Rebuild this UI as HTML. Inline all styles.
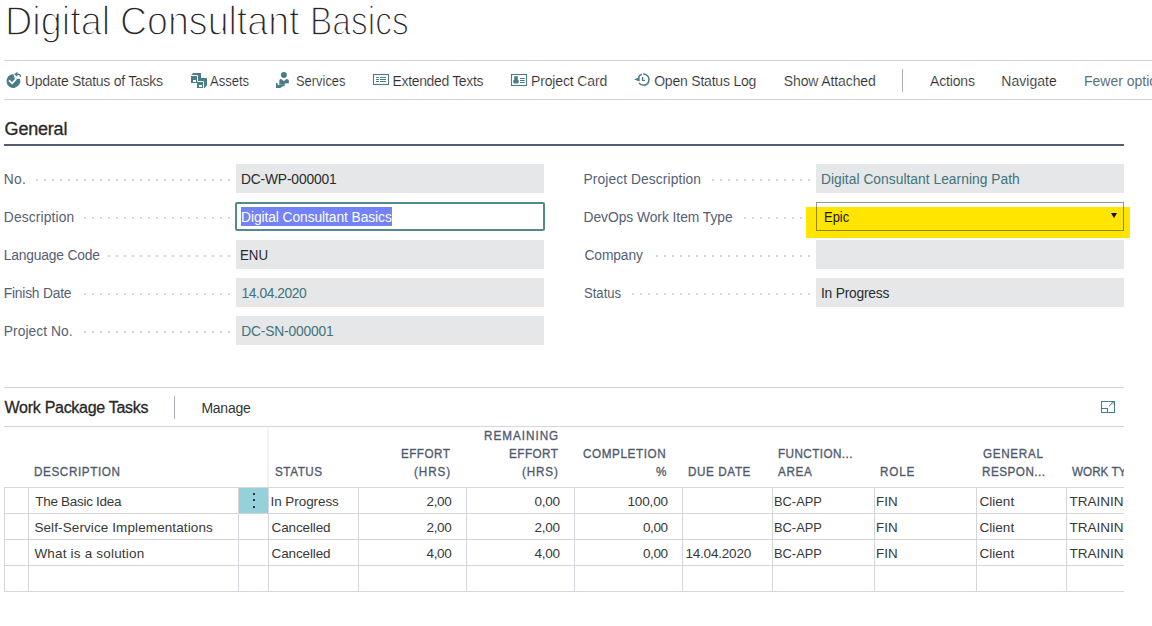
<!DOCTYPE html>
<html><head><meta charset="utf-8">
<style>
html,body{margin:0;padding:0;background:#fff;width:1152px;height:626px;overflow:hidden;position:relative;font-family:"Liberation Sans",sans-serif;}
.a{position:absolute;white-space:nowrap;}
.t{position:absolute;white-space:nowrap;line-height:1;}
.title{left:5px;top:0px;font-size:41.5px;color:#262626;-webkit-text-stroke:1.5px #fff;transform-origin:0 0;transform:scaleX(0.8817);}
.hl{position:absolute;height:1px;background:#d4d6da;}
.ico{position:absolute;}
.fld{position:absolute;background:#e6e7e9;height:29px;}
.dots{position:absolute;height:2px;background:repeating-linear-gradient(to right,#d2d4d8 0 2px,transparent 2px 8px);}
.vl{position:absolute;width:1px;background:#d8dadf;}
</style></head><body>
<div class="hl" style="left:4px;top:60px;width:1148px"></div>
<div class="hl" style="left:4px;top:99px;width:1148px"></div>
<svg class="ico" style="left:4px;top:68px" width="20" height="22" viewBox="0 0 20 22">
  <path d="M9.2 6.1 A6.9 6.9 0 1 0 15.95 10.8 L11 11 Z" fill="#4a7d88"/>
  <path d="M5 12.4 L8.1 15.4 L12.2 10.9" stroke="#fff" stroke-width="1.7" fill="none"/>
  <path d="M10.1 6.3 L13.4 3.8 L13.4 8.7 Z" fill="#4a7d88"/>
  <path d="M13 6.3 C15.4 6.1 16.5 6.8 16.6 8.9" stroke="#4a7d88" stroke-width="1.4" fill="none"/>
</svg>
<svg class="ico" style="left:186px;top:68px" width="22" height="22" viewBox="0 0 22 22">
  <path d="M5 7.3 L7.3 5 H14.6 L15 5.4 V10 H20.6 L21 10.4 V17.6 L18.6 20 H11 V15 H5 Z" fill="#4a7d88"/>
  <path d="M5 7.5 H11.5 V13.5 H17.5 V20" stroke="#fff" stroke-width="1" fill="none"/>
  <rect x="7" y="12" width="3" height="2" fill="#fff"/>
  <rect x="13" y="17" width="3" height="2" fill="#fff"/>
</svg>
<svg class="ico" style="left:272px;top:68px" width="22" height="22" viewBox="0 0 22 22">
  <circle cx="11.9" cy="6.9" r="3" fill="#4a7d88"/>
  <path d="M7.3 13 C7.3 11.6 8.2 11 9.4 11 L11.3 12.8 L12.5 12.8 L14.4 11 C15.9 11 16.9 11.8 16.9 13.2 L16.9 15.3 L12.8 15.6 L12.3 18.6 L11.6 16.2 L7.3 16.6 Z" fill="#4a7d88"/>
  <path d="M4 15 L5.6 15 L5.6 16.9 L12.2 15.9 L12.6 17.4 L8.6 19.4 L8.6 20 L4 20 Z" fill="#4a7d88"/>
</svg>
<svg class="ico" style="left:370px;top:70px" width="22" height="20" viewBox="0 0 22 20">
  <rect x="3.5" y="4.5" width="15" height="10" stroke="#4a7d88" stroke-width="1.1" fill="none"/>
  <path d="M6 7.4 H8.9 M6 9.5 H8.9 M6 11.5 H8.9 M10.1 7.4 H16 M10.1 9.5 H16 M10.1 11.5 H16" stroke="#4a7d88" stroke-width="1"/>
</svg>
<svg class="ico" style="left:508px;top:70px" width="22" height="20" viewBox="0 0 22 20">
  <rect x="3.5" y="4.5" width="15" height="11" stroke="#4a7d88" stroke-width="1.1" fill="none"/>
  <path d="M6.2 6.2 H9.8 V9.9 H10.6 V12.8 L9.8 13.6 H6.2 L5.3 12.8 V9.9 H6.2 Z" fill="#4a7d88"/>
  <path d="M12 8.5 H16.8 M12 10.5 H16.8 M12 12.5 H16.8" stroke="#4a7d88" stroke-width="1"/>
</svg>
<svg class="ico" style="left:632px;top:70px" width="20" height="20" viewBox="0 0 20 20">
  <path d="M11.2 4.1 A5.6 5.6 0 1 1 6.9 12.9" stroke="#4a7d88" stroke-width="1.5" fill="none"/>
  <path d="M9.9 4.3 A5.6 5.6 0 0 0 6.3 7.6" stroke="#4a7d88" stroke-width="1.5" fill="none"/>
  <path d="M2.1 9.4 L7.6 7.1 L7.6 11.6 Z" fill="#4a7d88"/>
  <path d="M10.5 7 V10.4 H13" stroke="#4a7d88" stroke-width="1.3" fill="none"/>
</svg>
<div class="vl" style="left:902px;top:69px;height:23px;background:#adb0bf"></div>
<div class="a" style="left:4px;top:144px;width:1120px;height:2px;background:#565c70"></div>
<div class="dots" style="left:36px;top:179px;width:194px"></div>
<div class="fld" style="left:236px;top:164px;width:308px"></div>
<div class="dots" style="left:84px;top:217px;width:146px"></div>
<div class="dots" style="left:108px;top:255px;width:122px"></div>
<div class="fld" style="left:236px;top:240px;width:308px"></div>
<div class="dots" style="left:84px;top:293px;width:146px"></div>
<div class="fld" style="left:236px;top:278px;width:308px"></div>
<div class="dots" style="left:84px;top:331px;width:146px"></div>
<div class="fld" style="left:236px;top:316px;width:308px"></div>
<div class="dots" style="left:712px;top:179px;width:98px"></div>
<div class="fld" style="left:816px;top:164px;width:308px"></div>
<div class="dots" style="left:744px;top:217px;width:66px"></div>
<div class="dots" style="left:656px;top:255px;width:154px"></div>
<div class="fld" style="left:816px;top:240px;width:308px"></div>
<div class="dots" style="left:632px;top:293px;width:178px"></div>
<div class="fld" style="left:816px;top:278px;width:308px"></div>
<div class="a" style="left:235px;top:202px;width:306px;height:25px;border:2px solid #548a8a;border-radius:2px;background:#fff"></div>
<div class="a" style="left:241px;top:207px;width:151px;height:19px;background:#7382f7"></div>
<div class="a" style="left:816px;top:202px;width:308px;height:29px;background:#fff"></div>
<div class="a" style="left:806px;top:207px;width:324px;height:31px;background:#ffe500"></div>
<div class="a" style="left:816px;top:202px;width:306px;height:27px;border:1px solid rgba(0,0,0,0.42)"></div>
<svg class="ico" style="left:1110px;top:212px" width="8" height="7" viewBox="0 0 8 7"><path d="M1 1 H7 L4 6 Z" fill="#111"/></svg>
<div class="hl" style="left:4px;top:387px;width:1120px"></div>
<div class="vl" style="left:174px;top:396px;height:23px;background:#adb0bf"></div>
<svg class="ico" style="left:1100px;top:400px" width="16" height="14" viewBox="0 0 16 14">
  <path d="M1.5 1.5 H14.5 V12.5 H1.5 Z M1.5 8.5 H7.5 V12.5" stroke="#4a7d88" stroke-width="1.1" fill="none"/>
  <path d="M9 6.2 L13.6 1.9 M11 1.8 H14.2 V5" stroke="#4a7d88" stroke-width="1" fill="none"/>
</svg>
<div class="hl" style="left:4px;top:426px;width:1120px"></div>
<div class="hl" style="left:4px;top:487px;width:1120px;background:#d4d6dc"></div>
<div class="hl" style="left:4px;top:513px;width:1120px;background:#d4d6dc"></div>
<div class="hl" style="left:4px;top:539px;width:1120px;background:#d4d6dc"></div>
<div class="hl" style="left:4px;top:565px;width:1120px;background:#d4d6dc"></div>
<div class="hl" style="left:4px;top:591px;width:1120px;background:#d4d6dc"></div>
<div class="vl" style="left:4px;top:487px;height:105px;background:#d4d6dc"></div>
<div class="vl" style="left:28px;top:487px;height:105px;background:#d4d6dc"></div>
<div class="vl" style="left:238px;top:487px;height:105px;background:#d4d6dc"></div>
<div class="vl" style="left:268px;top:487px;height:105px;background:#d4d6dc"></div>
<div class="vl" style="left:358px;top:487px;height:105px;background:#d4d6dc"></div>
<div class="vl" style="left:466px;top:487px;height:105px;background:#d4d6dc"></div>
<div class="vl" style="left:574px;top:487px;height:105px;background:#d4d6dc"></div>
<div class="vl" style="left:682px;top:487px;height:105px;background:#d4d6dc"></div>
<div class="vl" style="left:772px;top:487px;height:105px;background:#d4d6dc"></div>
<div class="vl" style="left:874px;top:487px;height:105px;background:#d4d6dc"></div>
<div class="vl" style="left:976px;top:487px;height:105px;background:#d4d6dc"></div>
<div class="vl" style="left:1066px;top:487px;height:105px;background:#d4d6dc"></div>
<div class="vl" style="left:267px;top:427px;width:2px;height:60px;background:#f2f2f3"></div>
<div class="a" style="left:239px;top:488px;width:29px;height:25px;background:#96d1d9"></div>
<div class="a" style="left:252.6px;top:493.4px;width:2px;height:2px;border-radius:0.6px;background:#1e2a2e"></div>
<div class="a" style="left:252.6px;top:499.2px;width:2px;height:2px;border-radius:0.6px;background:#1e2a2e"></div>
<div class="a" style="left:252.6px;top:505.9px;width:2px;height:2px;border-radius:0.6px;background:#1e2a2e"></div>
<div class="t" style="left:4.66px;top:0.37px;font-size:41.5px;color:#262626;letter-spacing:0.000px;-webkit-text-stroke:1.5px #fff;transform-origin:0 0;transform:scaleX(0.9128016817008595);">Digital</div>
<div class="t" style="left:120.09px;top:0.37px;font-size:41.5px;color:#262626;letter-spacing:0.000px;-webkit-text-stroke:1.5px #fff;transform-origin:0 0;transform:scaleX(0.9046506263749619);">Consultant</div>
<div class="t" style="left:310.48px;top:0.37px;font-size:41.5px;color:#262626;letter-spacing:0.000px;-webkit-text-stroke:1.5px #fff;transform-origin:0 0;transform:scaleX(0.8068840460255187);">Basics</div>
<div class="t" style="left:24.90px;top:74.15px;font-size:14px;color:#2e2e2e;letter-spacing:-0.270px;-webkit-text-stroke:0.15px #fff;">Update Status of Tasks</div>
<div class="t" style="left:210.20px;top:74.15px;font-size:14px;color:#2e2e2e;letter-spacing:0.000px;-webkit-text-stroke:0.15px #fff;transform-origin:0 0;transform:scaleX(0.9306494351727025);">Assets</div>
<div class="t" style="left:295.90px;top:74.15px;font-size:14px;color:#2e2e2e;letter-spacing:0.000px;-webkit-text-stroke:0.15px #fff;transform-origin:0 0;transform:scaleX(0.9220861909006565);">Services</div>
<div class="t" style="left:392.50px;top:74.15px;font-size:14px;color:#2e2e2e;letter-spacing:-0.344px;-webkit-text-stroke:0.15px #fff;">Extended Texts</div>
<div class="t" style="left:531.00px;top:74.15px;font-size:14px;color:#2e2e2e;letter-spacing:-0.138px;-webkit-text-stroke:0.15px #fff;">Project Card</div>
<div class="t" style="left:654.20px;top:74.15px;font-size:14px;color:#2e2e2e;letter-spacing:-0.206px;-webkit-text-stroke:0.15px #fff;">Open Status Log</div>
<div class="t" style="left:783.75px;top:74.15px;font-size:14px;color:#2e2e2e;letter-spacing:-0.111px;-webkit-text-stroke:0.15px #fff;">Show Attached</div>
<div class="t" style="left:930.00px;top:74.15px;font-size:14px;color:#2e2e2e;letter-spacing:-0.152px;-webkit-text-stroke:0.15px #fff;">Actions</div>
<div class="t" style="left:1001.30px;top:74.15px;font-size:14px;color:#2e2e2e;letter-spacing:0.033px;-webkit-text-stroke:0.15px #fff;">Navigate</div>
<div class="t" style="left:1084.00px;top:74.15px;font-size:14px;color:#5d6f80;letter-spacing:0.000px;">Fewer options</div>
<div class="t" style="left:201.40px;top:401.15px;font-size:14px;color:#333;letter-spacing:-0.241px;">Manage</div>
<div class="t" style="left:4.60px;top:119.76px;font-size:18px;color:#2a2a2a;letter-spacing:-0.206px;-webkit-text-stroke:0.3px #262626;">General</div>
<div class="t" style="left:4.60px;top:400.46px;font-size:16px;color:#2a2a2a;letter-spacing:-0.288px;-webkit-text-stroke:0.3px #262626;">Work Package Tasks</div>
<div class="t" style="left:3.80px;top:172.82px;font-size:13.8px;color:#566074;letter-spacing:0.332px;">No.</div>
<div class="t" style="left:3.80px;top:210.82px;font-size:13.8px;color:#566074;letter-spacing:0.146px;">Description</div>
<div class="t" style="left:3.80px;top:248.82px;font-size:13.8px;color:#566074;letter-spacing:-0.169px;">Language Code</div>
<div class="t" style="left:3.80px;top:286.82px;font-size:13.8px;color:#566074;letter-spacing:-0.211px;">Finish Date</div>
<div class="t" style="left:3.80px;top:324.82px;font-size:13.8px;color:#566074;letter-spacing:0.059px;">Project No.</div>
<div class="t" style="left:583.50px;top:172.82px;font-size:13.8px;color:#566074;letter-spacing:0.094px;">Project Description</div>
<div class="t" style="left:583.50px;top:210.82px;font-size:13.8px;color:#566074;letter-spacing:-0.032px;">DevOps Work Item Type</div>
<div class="t" style="left:584.50px;top:248.82px;font-size:13.8px;color:#566074;letter-spacing:-0.108px;">Company</div>
<div class="t" style="left:583.70px;top:286.82px;font-size:13.8px;color:#566074;letter-spacing:0.000px;transform-origin:0 0;transform:scaleX(0.9486118909403742);">Status</div>
<div class="t" style="left:240.90px;top:172.82px;font-size:13.8px;color:#2a2a2a;letter-spacing:-0.146px;">DC-WP-000001</div>
<div class="t" style="left:241.00px;top:210.82px;font-size:13.8px;color:#fff;letter-spacing:-0.075px;">Digital Consultant Basics</div>
<div class="t" style="left:240.44px;top:248.82px;font-size:13.8px;color:#2a2a2a;letter-spacing:0.000px;transform-origin:0 0;transform:scaleX(0.9607570620707324);">ENU</div>
<div class="t" style="left:241.60px;top:286.82px;font-size:13.8px;color:#41737b;letter-spacing:-0.442px;">14.04.2020</div>
<div class="t" style="left:241.20px;top:324.82px;font-size:13.8px;color:#41737b;letter-spacing:-0.177px;">DC-SN-000001</div>
<div class="t" style="left:821.00px;top:172.82px;font-size:13.8px;color:#41737b;letter-spacing:0.026px;">Digital Consultant Learning Path</div>
<div class="t" style="left:823.76px;top:210.82px;font-size:13.8px;color:#1a1a00;letter-spacing:0.000px;transform-origin:0 0;transform:scaleX(0.9406028150820834);">Epic</div>
<div class="t" style="left:821.00px;top:286.82px;font-size:13.8px;color:#2a2a2a;letter-spacing:-0.215px;">In Progress</div>
<div class="t" style="left:33.84px;top:465.09px;font-size:13.6px;color:#505a6e;letter-spacing:0.706px;-webkit-text-stroke:0.35px #505a6e;transform-origin:0 0;transform:scaleX(0.86);">DESCRIPTION</div>
<div class="t" style="left:274.70px;top:465.09px;font-size:13.6px;color:#505a6e;letter-spacing:0.646px;-webkit-text-stroke:0.35px #505a6e;transform-origin:0 0;transform:scaleX(0.86);">STATUS</div>
<div class="t" style="left:401.14px;top:447.09px;font-size:13.6px;color:#505a6e;letter-spacing:0.529px;-webkit-text-stroke:0.35px #505a6e;transform-origin:0 0;transform:scaleX(0.86);">EFFORT</div>
<div class="t" style="left:413.80px;top:465.09px;font-size:13.6px;color:#505a6e;letter-spacing:1.042px;-webkit-text-stroke:0.35px #505a6e;transform-origin:0 0;transform:scaleX(0.86);">(HRS)</div>
<div class="t" style="left:484.04px;top:429.09px;font-size:13.6px;color:#505a6e;letter-spacing:1.149px;-webkit-text-stroke:0.35px #505a6e;transform-origin:0 0;transform:scaleX(0.86);">REMAINING</div>
<div class="t" style="left:509.04px;top:447.09px;font-size:13.6px;color:#505a6e;letter-spacing:0.552px;-webkit-text-stroke:0.35px #505a6e;transform-origin:0 0;transform:scaleX(0.86);">EFFORT</div>
<div class="t" style="left:522.30px;top:465.09px;font-size:13.6px;color:#505a6e;letter-spacing:0.984px;-webkit-text-stroke:0.35px #505a6e;transform-origin:0 0;transform:scaleX(0.86);">(HRS)</div>
<div class="t" style="left:583.40px;top:447.09px;font-size:13.6px;color:#505a6e;letter-spacing:0.698px;-webkit-text-stroke:0.35px #505a6e;transform-origin:0 0;transform:scaleX(0.86);">COMPLETION</div>
<div class="t" style="left:655.99px;top:465.09px;font-size:13.6px;color:#505a6e;letter-spacing:0.000px;-webkit-text-stroke:0.35px #505a6e;transform-origin:0 0;transform:scaleX(0.86);">%</div>
<div class="t" style="left:687.84px;top:465.09px;font-size:13.6px;color:#505a6e;letter-spacing:0.694px;-webkit-text-stroke:0.35px #505a6e;transform-origin:0 0;transform:scaleX(0.86);">DUE DATE</div>
<div class="t" style="left:777.54px;top:447.09px;font-size:13.6px;color:#505a6e;letter-spacing:0.499px;-webkit-text-stroke:0.35px #505a6e;transform-origin:0 0;transform:scaleX(0.86);">FUNCTION...</div>
<div class="t" style="left:778.40px;top:465.09px;font-size:13.6px;color:#505a6e;letter-spacing:0.761px;-webkit-text-stroke:0.35px #505a6e;transform-origin:0 0;transform:scaleX(0.86);">AREA</div>
<div class="t" style="left:879.64px;top:465.09px;font-size:13.6px;color:#505a6e;letter-spacing:1.001px;-webkit-text-stroke:0.35px #505a6e;transform-origin:0 0;transform:scaleX(0.86);">ROLE</div>
<div class="t" style="left:982.50px;top:447.09px;font-size:13.6px;color:#505a6e;letter-spacing:0.785px;-webkit-text-stroke:0.35px #505a6e;transform-origin:0 0;transform:scaleX(0.86);">GENERAL</div>
<div class="t" style="left:981.64px;top:465.09px;font-size:13.6px;color:#505a6e;letter-spacing:0.569px;-webkit-text-stroke:0.35px #505a6e;transform-origin:0 0;transform:scaleX(0.86);">RESPON...</div>
<div class="t" style="left:1072.30px;top:465.09px;font-size:13.6px;color:#505a6e;letter-spacing:0.000px;-webkit-text-stroke:0.35px #505a6e;transform-origin:0 0;transform:scaleX(0.86);">WORK TYPE</div>
<div class="t" style="left:35.30px;top:494.57px;font-size:13.5px;color:#383838;letter-spacing:-0.303px;">The Basic Idea</div>
<div class="t" style="left:270.60px;top:494.57px;font-size:13.5px;color:#383838;letter-spacing:-0.078px;">In Progress</div>
<div class="t" style="left:426.60px;top:494.57px;font-size:13.5px;color:#383838;letter-spacing:-0.389px;">2,00</div>
<div class="t" style="left:534.50px;top:494.57px;font-size:13.5px;color:#383838;letter-spacing:-0.256px;">0,00</div>
<div class="t" style="left:627.40px;top:494.57px;font-size:13.5px;color:#383838;letter-spacing:-0.117px;">100,00</div>
<div class="t" style="left:773.95px;top:494.57px;font-size:13.5px;color:#383838;letter-spacing:0.000px;transform-origin:0 0;transform:scaleX(0.952128508482807);">BC-APP</div>
<div class="t" style="left:876.01px;top:494.57px;font-size:13.5px;color:#383838;letter-spacing:0.000px;transform-origin:0 0;transform:scaleX(0.9901450407774577);">FIN</div>
<div class="t" style="left:979.40px;top:494.57px;font-size:13.5px;color:#383838;letter-spacing:0.047px;">Client</div>
<div class="t" style="left:1069.60px;top:494.57px;font-size:13.5px;color:#383838;letter-spacing:0.000px;">TRAINING</div>
<div class="t" style="left:34.40px;top:520.57px;font-size:13.5px;color:#383838;letter-spacing:0.103px;">Self-Service Implementations</div>
<div class="t" style="left:271.60px;top:520.57px;font-size:13.5px;color:#383838;letter-spacing:-0.141px;">Cancelled</div>
<div class="t" style="left:426.60px;top:520.57px;font-size:13.5px;color:#383838;letter-spacing:-0.389px;">2,00</div>
<div class="t" style="left:534.50px;top:520.57px;font-size:13.5px;color:#383838;letter-spacing:-0.256px;">2,00</div>
<div class="t" style="left:643.00px;top:520.57px;font-size:13.5px;color:#383838;letter-spacing:-0.389px;">0,00</div>
<div class="t" style="left:773.95px;top:520.57px;font-size:13.5px;color:#383838;letter-spacing:0.000px;transform-origin:0 0;transform:scaleX(0.952128508482807);">BC-APP</div>
<div class="t" style="left:876.01px;top:520.57px;font-size:13.5px;color:#383838;letter-spacing:0.000px;transform-origin:0 0;transform:scaleX(0.9901450407774577);">FIN</div>
<div class="t" style="left:979.40px;top:520.57px;font-size:13.5px;color:#383838;letter-spacing:0.047px;">Client</div>
<div class="t" style="left:1069.60px;top:520.57px;font-size:13.5px;color:#383838;letter-spacing:0.000px;">TRAINING</div>
<div class="t" style="left:34.40px;top:546.57px;font-size:13.5px;color:#383838;letter-spacing:0.192px;">What is a solution</div>
<div class="t" style="left:271.60px;top:546.57px;font-size:13.5px;color:#383838;letter-spacing:-0.141px;">Cancelled</div>
<div class="t" style="left:426.60px;top:546.57px;font-size:13.5px;color:#383838;letter-spacing:-0.389px;">4,00</div>
<div class="t" style="left:534.50px;top:546.57px;font-size:13.5px;color:#383838;letter-spacing:-0.256px;">4,00</div>
<div class="t" style="left:643.00px;top:546.57px;font-size:13.5px;color:#383838;letter-spacing:-0.389px;">0,00</div>
<div class="t" style="left:685.40px;top:546.57px;font-size:13.5px;color:#383838;letter-spacing:-0.195px;">14.04.2020</div>
<div class="t" style="left:773.95px;top:546.57px;font-size:13.5px;color:#383838;letter-spacing:0.000px;transform-origin:0 0;transform:scaleX(0.952128508482807);">BC-APP</div>
<div class="t" style="left:876.01px;top:546.57px;font-size:13.5px;color:#383838;letter-spacing:0.000px;transform-origin:0 0;transform:scaleX(0.9901450407774577);">FIN</div>
<div class="t" style="left:979.40px;top:546.57px;font-size:13.5px;color:#383838;letter-spacing:0.047px;">Client</div>
<div class="t" style="left:1069.60px;top:546.57px;font-size:13.5px;color:#383838;letter-spacing:0.000px;">TRAINING</div>
<div class="a" style="left:1124px;top:427px;width:28px;height:199px;background:#fff"></div>
</body></html>
